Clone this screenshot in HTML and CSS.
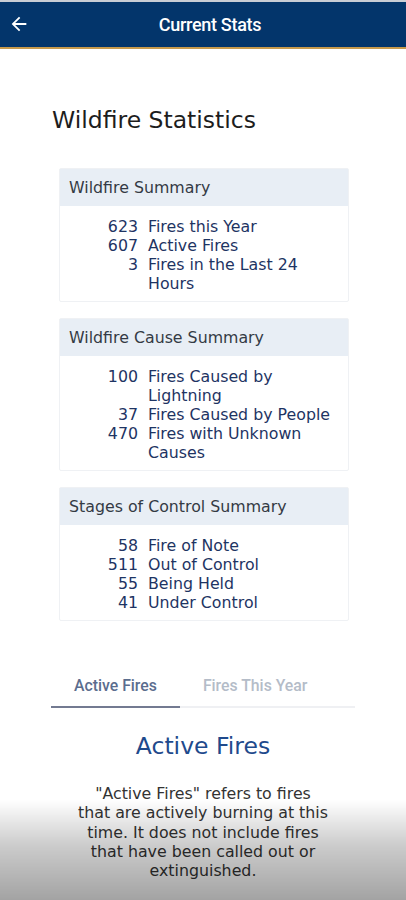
FILE: index.html
```html
<!DOCTYPE html>
<html>
<head>
<meta charset="utf-8">
<link rel="stylesheet" href="styles.css">
</head>
<body>
<header class="appbar">
  <svg class="back" width="22" height="22" viewBox="0 0 24 24"><path d="M20 11H7.83l5.59-5.59L12 4l-8 8 8 8 1.41-1.41L7.83 13H20v-2z" fill="#fff"/></svg>
  <div class="appbar-title">Current Stats</div>
</header>
<main class="page">
  <h1 class="title">Wildfire Statistics</h1>

  <section class="card">
    <div class="card-head">Wildfire Summary</div>
    <div class="card-body">
      <span class="num">623</span><span class="lbl">Fires this Year</span>
      <span class="num">607</span><span class="lbl">Active Fires</span>
      <span class="num">3</span><span class="lbl">Fires in the Last 24 Hours</span>
    </div>
  </section>

  <section class="card">
    <div class="card-head">Wildfire Cause Summary</div>
    <div class="card-body">
      <span class="num">100</span><span class="lbl">Fires Caused by Lightning</span>
      <span class="num">37</span><span class="lbl">Fires Caused by People</span>
      <span class="num">470</span><span class="lbl">Fires with Unknown Causes</span>
    </div>
  </section>

  <section class="card">
    <div class="card-head">Stages of Control Summary</div>
    <div class="card-body">
      <span class="num">58</span><span class="lbl">Fire of Note</span>
      <span class="num">511</span><span class="lbl">Out of Control</span>
      <span class="num">55</span><span class="lbl">Being Held</span>
      <span class="num">41</span><span class="lbl">Under Control</span>
    </div>
  </section>

  <nav class="tabs">
    <div class="tab active">Active Fires</div>
    <div class="tab">Fires This Year</div>
  </nav>

  <h2 class="sub">Active Fires</h2>
  <p class="desc">"Active Fires" refers to fires that are actively burning at this time. It does not include fires that have been called out or extinguished.</p>
</main>
<div class="fade"></div>
</body>
</html>
```
FILE: styles.css
```css
html, body {
  margin: 0;
  padding: 0;
  background: #fff;
}
body {
  font-family: "DejaVu Sans", Verdana, sans-serif;
  width: 406px;
  min-height: 900px;
  overflow: hidden;
}
.appbar {
  height: 45px;
  background: #03356b;
  border-top: 2px solid #c9cdd5;
  border-bottom: 2px solid #c79a4c;
  display: flex;
  align-items: center;
  position: relative;
  justify-content: center;
}
.back {
  position: absolute;
  left: 8px;
  top: 11px;
}
.appbar-title {
  font-family: Roboto, "Liberation Sans", sans-serif;
  font-weight: 500;
  font-size: 18px;
  color: #fff;
  margin-left: 14px;
  letter-spacing: -0.3px;
}
.page {
  padding: 0 51px 0 51px;
}
.title {
  margin: 57px 0 34px 1px;
  font-weight: normal;
  font-size: 23.5px;
  line-height: 28px;
  color: #1d1d1d;
}
.card {
  margin: 0 6px 16px 8px;
  border: 1px solid #eff1f4;
  border-radius: 2px;
}
.card-head {
  background: #e8eef5;
  height: 37px;
  display: flex;
  align-items: center;
  padding-left: 9px;
  font-size: 15.8px;
  color: #343a44;
}
.card-body {
  display: grid;
  grid-template-columns: 70px 194px;
  column-gap: 10px;
  padding: 11px 7px 8px 8px;
  font-size: 15.8px;
  line-height: 19px;
  color: #1e3463;
}
.num {
  text-align: right;
}
.tabs {
  display: flex;
  border-bottom: 2px solid #eff0f3;
  margin-top: 45px;
}
.tab {
  font-family: Roboto, "Liberation Sans", sans-serif;
  font-weight: 500;
  font-size: 15.8px;
  color: #b4bcc8;
  padding: 10px 23px 11px 23px;
  margin-bottom: -2px;
  border-bottom: 2px solid transparent;
}
.tab.active {
  color: #5b6d8e;
  border-bottom-color: #737a91;
}
.sub {
  text-align: center;
  font-weight: normal;
  font-size: 23.5px;
  color: #1f4a8c;
  margin: 24px 0 0 0;
  line-height: 28px;
}
.desc {
  text-align: center;
  font-size: 15.8px;
  line-height: 19.3px;
  color: #333;
  margin: 24px 27px 0 27px;
}
.fade {
  position: fixed;
  left: 0;
  right: 0;
  bottom: 0;
  height: 100px;
  background: linear-gradient(to bottom, rgba(0,0,0,0) 0%, rgba(0,0,0,0.2) 45%, rgba(0,0,0,0.36) 100%);
  pointer-events: none;
}
```
